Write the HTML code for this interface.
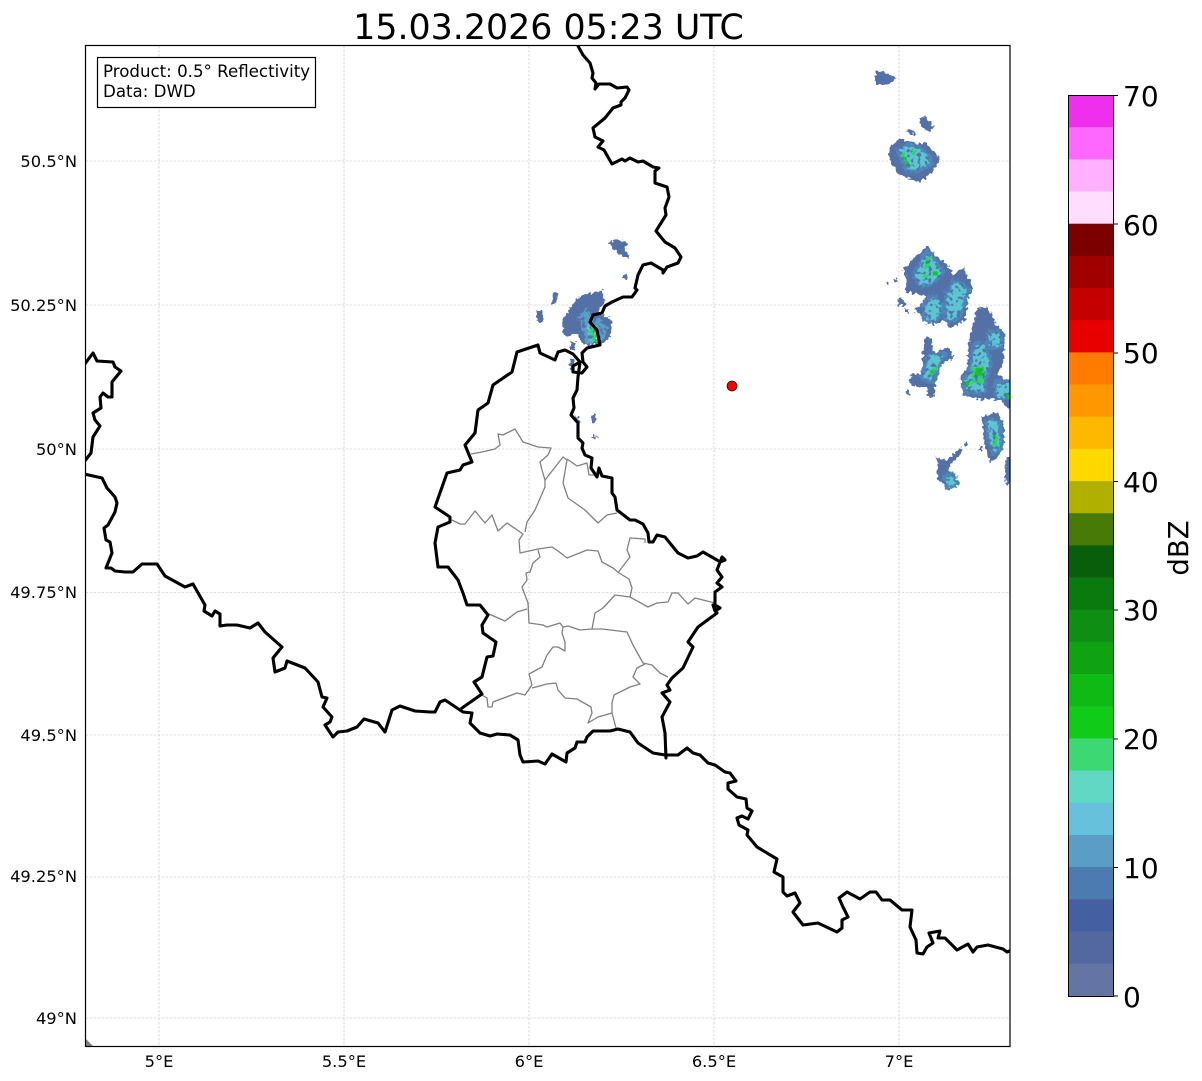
<!DOCTYPE html>
<html>
<head>
<meta charset="utf-8">
<style>
html,body{margin:0;padding:0;background:#fff;width:1202px;height:1081px;overflow:hidden}
svg{display:block}
text{font-family:"DejaVu Sans",sans-serif;fill:#000}
.t{font-size:16.3px}
.c{font-size:28px}
.b{fill:none;stroke:#000;stroke-width:3.1;stroke-linejoin:round;stroke-linecap:round}
.g{fill:none;stroke:#808080;stroke-width:1.3;stroke-linejoin:round}
.m{fill:#5cc6d0;stroke:#4f86b8;stroke-width:7;paint-order:stroke;stroke-linejoin:round}
.d{fill:#5570a6}
.n{fill:#2fd46a}
.k{fill:#10c820}
</style>
</head>
<body>
<svg width="1202" height="1081" viewBox="0 0 1202 1081" xmlns="http://www.w3.org/2000/svg">
<defs>
<clipPath id="ax"><rect x="85.5" y="45.5" width="924.5" height="1001"/></clipPath>
<filter id="r" filterUnits="userSpaceOnUse" x="500" y="40" width="520" height="460" color-interpolation-filters="sRGB">
<feTurbulence type="fractalNoise" baseFrequency="0.33" numOctaves="1" seed="4" result="n"/>
<feDisplacementMap in="SourceGraphic" in2="n" scale="7" xChannelSelector="R" yChannelSelector="G" result="s"/>
<feTurbulence type="fractalNoise" baseFrequency="0.28" numOctaves="1" seed="11" result="n2"/>
<feColorMatrix in="n2" type="matrix" values="0 0 0 0 0.31  0 0 0 0 0.45  0 0 0 0 0.68  9 0 0 0 -4.9" result="p"/>
<feComposite in="p" in2="s" operator="in" result="pc"/>
<feMerge><feMergeNode in="s"/><feMergeNode in="pc"/></feMerge>
</filter>
</defs>

<text x="548.5" y="39" text-anchor="middle" style="font-size:34.8px">15.03.2026 05:23 UTC</text>

<g stroke="#bcbcbc" stroke-width="0.6" stroke-dasharray="2.5 1.5">
<path d="M159 46V1046M344 46V1046M529 46V1046M714 46V1046M899 46V1046"/>
<path d="M86 161H1010M86 305H1010M86 449H1010M86 592.500H1010M86 735H1010M86 877H1010M86 1018H1010"/>
</g>

<g clip-path="url(#ax)">
<g filter="url(#r)">
<!-- top right small -->
<polygon class="d" points="876,71 883,71 897,79 892,82 886,85 877,85 875,80"/>
<polygon class="d" points="919,119 926,117 934,127 930,131 922,128"/>
<polygon class="d" points="908,128 917,134 915,136 907,131"/>
<!-- cell A -->
<polygon class="d" points="888,148 900,138 910,142 917,145 925,142 940,158 937,167 927,177 920,182 905,177 896,172 890,160"/>
<polygon class="m" points="899,150 912,145 927,155 930,163 916,170 908,170"/>
<polygon class="n" points="900,154 904,153 911,166 908,168"/>
<polygon class="n" points="911,149 916,151 915,155 911,153"/>
<polygon class="k" points="903,157 905,156 909,165 907,166"/>
<!-- cell B -->
<polygon class="d" points="903,270 917,255 927,247 938,257 950,268 952,275 963,268 973,288 968,298 965,320 950,328 943,320 933,325 923,317 913,310 923,303 925,295 910,293 905,293 907,280"/>
<polygon class="m" points="915,275 927,253 942,272 933,282 921,285"/>
<polygon class="m" points="925,305 933,297 943,307 935,320 927,320"/>
<polygon class="m" points="947,294 955,282 967,290 958,317 947,320"/>
<polygon class="n" points="925,257 930,257 930,268 925,268"/>
<polygon class="k" points="926,260 929,260 929,265 926,265"/>
<polygon class="k" points="932,272 937,271 937,275 932,276"/>
<polygon class="n" points="922,273 930,275 928,278 923,277"/>
<polygon class="d" points="898,299 905,300 905,306 898,305"/>
<polygon class="d" points="887,282 890,283 889,286 887,285"/>
<polygon class="d" points="895,278 898,278 898,282 895,282"/>
<polygon class="d" points="905,309 908,309 908,313 905,313"/>
<!-- cell C -->
<polygon class="d" points="923,355 925,338 932,338 933,353 948,347 953,355 952,360 940,363 937,377 933,397 928,397 927,387 913,387 909,382 912,373 920,375 923,363"/>
<polygon class="m" points="923,378 930,356 945,355 938,365 933,380"/>
<polygon class="n" points="927,376 933,367 937,368 932,378"/>
<polygon class="k" points="931,370 934,369 934,373 931,373"/>
<polygon class="d" points="907,390 909,390 909,394 907,394"/>
<!-- cell D -->
<polygon class="d" points="977,308 988,307 995,323 1005,333 1003,363 997,375 1012,383 1012,410 1005,407 1000,397 980,400 963,395 960,377 967,370 968,347 972,327"/>
<polygon class="m" points="975,345 984,345 989,363 984,380 984,391 967,391 965,381 972,370"/>
<polygon class="m" points="990,333 1000,333 1000,346 990,346"/>
<polygon class="m" points="997,383 1012,383 1012,397 997,397"/>
<polygon class="n" points="972,368 984,366 984,382 972,384"/>
<polygon class="k" points="975,369 982,368 982,377 975,378"/>
<polygon class="k" points="965,381 970,381 970,386 965,386"/>
<polygon class="k" points="1006,393 1012,393 1012,398 1006,398"/>
<!-- cell E -->
<polygon class="d" points="982,417 995,412 1003,420 1005,443 998,457 990,463 987,453 983,437"/>
<polygon class="m" points="988,420 998,422 1000,447 995,453 990,440"/>
<polygon class="n" points="993,434 997,434 997,448 993,448"/>
<polygon class="d" points="979,447 982,447 982,451 979,451"/>
<polygon class="d" points="965,442 968,442 968,446 965,446"/>
<!-- cell F -->
<polygon class="d" points="935,457 947,460 960,448 962,453 948,467 957,482 948,488 937,478 938,463"/>
<polygon class="m" points="946,476 953,476 955,484 948,486"/>
<polygon class="d" points="1006,457 1012,457 1012,484 1006,484 1005,470"/>
<!-- cell H -->
<polygon class="d" points="562,320 578,297 602,290 605,302 597,312 612,320 610,337 600,345 583,345 577,333 567,338 563,333"/>
<polygon fill="#5a9ec6" points="578,318 586,306 592,318 600,318 608,326 604,340 586,344"/>
<polygon fill="#5fd2c4" points="587,325 597,325 600,340 591,344"/>
<polygon class="n" points="589,327 594,327 597,343 592,343"/>
<polygon class="d" points="537,310 543,310 543,322 537,322"/>
<polygon class="d" points="553,292 558,292 556,305 552,305"/>
<polygon class="d" points="570,342 575,342 575,350 570,350"/>
<polygon class="d" points="570,358 574,358 574,370 570,370"/>
<polygon class="d" points="574,415 579,417 580,423 576,423"/>
<polygon class="d" points="592,415 595,415 595,423 592,423"/>
<polygon class="d" points="593,435 597,436 596,438 593,438"/>
<polygon class="d" points="608,243 618,239 628,243 625,250 630,255 625,258 617,253"/>
<polygon class="d" points="623,275 627,274 628,279 624,279"/>
</g>

<polygon fill="#808080" points="85,1038 93,1046 85,1046"/>

<g class="g">
<path d="M471 454L482 452L495 449L500 445L498 434L503 435L515 429L523 442L538 447L551 448L548 455L540 462L542 470L545 480L545 487L535 510L527 522L525 532"/>
<path d="M452 520L460 524L465 524L475 511L485 523L492 515L498 531L507 523L523 534L519 540L520 553L538 549L552 547L558 551L567 558L587 550L598 551L602 562L613 568L619 573L629 579L632 588L630 597"/>
<path d="M545 480L563 457L567 460L563 483L568 498L585 510L598 523L607 515L617 513"/>
<path d="M567 459L577 466L587 463L589 475L597 475"/>
<path d="M645 543L645 539L630 538L627 550L630 557L620 570L618 573"/>
<path d="M538 550L540 557L533 563L530 572L526 573L527 580L522 587L528 603L529 623L543 625L547 627L560 623L563 627L568 626L580 630L592 629L602 629L627 632L633 645L643 663L652 665L660 673L668 677"/>
<path d="M489 614L505 621L517 612L527 609"/>
<path d="M592 629L595 613L603 608L615 595L630 597L648 607L657 603L668 602L672 593L678 593L688 604L695 598L715 603"/>
<path d="M563 627L562 633L565 642L565 651L558 647L553 647L547 655L542 667L529 674L532 685L525 695L517 693L493 702L492 707L488 707L487 698L482 695"/>
<path d="M532 688L547 684L556 683L558 690L565 698L577 699L591 707L592 713L588 723L598 717L612 713L616 728"/>
<path d="M612 713L612 703L614 695L630 687L640 684L633 677L637 668L645 664"/>
</g>

<g class="b">
<!-- main east border -->
<path d="M578 46L583 55L590 63L593 73L592 78L596 83L595 89L599 84L610 84L617 88L627 87L629 90L625 98L621 102L621 105L613 108L605 118L593 128L595 137L603 141L598 147L604 150L612 164L622 159L625 161L630 158L638 162L643 161L653 167L659 168L655 171L655 183L667 187L669 197L665 208L666 215L656 231L665 242L675 248L681 257L678 263L667 267L663 273L663 270L651 263L643 265L638 275L635 288L637 290L632 297L623 297L612 302L605 306L602 313L593 315L590 322L597 330L600 345L587 348L582 353L583 362L587 367L582 373L573 372L573 366L580 362L578 377L577 390L573 398L574 408L571 415L578 423L578 438L583 443L582 448L585 455L592 458L591 468L597 477L599 468L602 476L612 478L612 493L615 497L617 510L630 520L635 520L643 524L648 533L649 542L653 542L657 535L665 537L678 553L688 558L697 556L703 552L717 560L720 562L725 560L722 557L717 570L722 577L717 583L722 587L715 592L715 605L720 608L715 611L713 605L717 613L698 627L688 642L693 647L683 668L672 678L667 685L670 690L662 693L670 702L662 717L665 733L666 758"/>
<!-- lux west & north -->
<path d="M580 362L573 354L565 350L558 352L555 360L540 353L538 345L517 352L512 372L493 385L488 403L478 410L475 433L465 445L472 462L463 465L460 470L447 473L435 507L450 517L450 522L438 527L435 543L438 567L448 567L458 580L463 593L467 605L480 605L488 615L482 625L483 633L496 642L493 656L487 657L482 677L474 682L482 694L462 708"/>
<!-- lux south -->
<path d="M460 710L463 712L472 713L470 723L480 733L490 736L497 734L510 735L518 740L520 755L523 762L538 761L545 764L552 754L566 762L567 753L575 748L577 742L585 742L587 737L593 731L610 731L618 729L630 732L638 743L653 753L665 755L678 755L687 748L693 753L700 755L708 763L715 765L725 772L730 773L736 781L728 783L728 789L737 797L746 799L747 808L752 811L748 819L742 816L737 818L739 825L748 830L747 835L757 847L777 859L774 872L783 877L783 892L787 896L795 893L800 903L793 912L803 925L818 923L837 932L842 928L842 920L848 917L843 907L839 898L847 892L860 899L870 892L876 892L882 900L890 900L902 910L912 910L910 927L916 940L917 953L923 954L927 947L933 943L929 933L940 931L938 938L945 938L957 950L968 944L973 952L977 947L988 945L1003 949L1007 952L1012 950"/>
<!-- west -->
<path d="M84 365L93 353L97 361L113 362L115 367L121 371L112 382L112 397L108 397L103 393L100 397L101 408L93 413L95 420L100 426L93 437L91 453L84 462"/>
<path d="M84 474L102 478L107 488L115 497L117 503L115 512L108 525L104 528L106 540L110 542L112 553L106 568L111 568L115 571L125 572L133 572L142 564L157 564L165 576L185 587L193 584L205 605L204 611L212 616L215 611L220 614L220 626L227 625L237 625L250 628L258 623L265 632L282 647L273 658L275 672L285 668L287 661L305 668L318 682L322 697L327 698L323 707L332 717L330 722L325 725L333 737L338 732L347 731L357 727L364 719L378 723L385 732L392 710L400 706L415 711L430 712L435 712L440 702L445 700L460 710"/>
</g>

<circle cx="732" cy="386" r="5" fill="#ff0000" stroke="#000" stroke-width="0.7"/>
</g>

<rect x="85.500" y="45.500" width="924.500" height="1001" fill="none" stroke="#000" stroke-width="1.2"/>

<rect x="97.500" y="57.500" width="218" height="50" fill="#fff" stroke="#000" stroke-width="1.2"/>
<text x="103" y="77" style="font-size:16.650px">Product: 0.5° Reflectivity</text>
<text x="103" y="97" style="font-size:16.650px">Data: DWD</text>

<g class="t">
<text x="77" y="167" text-anchor="end">50.5°N</text>
<text x="77" y="311" text-anchor="end">50.25°N</text>
<text x="77" y="455" text-anchor="end">50°N</text>
<text x="77" y="598" text-anchor="end">49.75°N</text>
<text x="77" y="741" text-anchor="end">49.5°N</text>
<text x="77" y="882" text-anchor="end">49.25°N</text>
<text x="77" y="1024" text-anchor="end">49°N</text>
<text x="159" y="1067" text-anchor="middle">5°E</text>
<text x="344" y="1067" text-anchor="middle">5.5°E</text>
<text x="529" y="1067" text-anchor="middle">6°E</text>
<text x="714" y="1067" text-anchor="middle">6.5°E</text>
<text x="899" y="1067" text-anchor="middle">7°E</text>
</g>

<!-- colorbar -->
<g>
<rect x="1068" y="95.000" width="45" height="32.5" fill="#ee30ee"/>
<rect x="1068" y="127.200" width="45" height="32.5" fill="#ff68ff"/>
<rect x="1068" y="159.400" width="45" height="32.5" fill="#ffb0ff"/>
<rect x="1068" y="191.500" width="45" height="32.5" fill="#ffddff"/>
<rect x="1068" y="223.700" width="45" height="32.5" fill="#7c0000"/>
<rect x="1068" y="255.900" width="45" height="32.5" fill="#a00000"/>
<rect x="1068" y="288.000" width="45" height="32.5" fill="#c40000"/>
<rect x="1068" y="320.200" width="45" height="32.5" fill="#e60000"/>
<rect x="1068" y="352.400" width="45" height="32.5" fill="#ff7c00"/>
<rect x="1068" y="384.600" width="45" height="32.5" fill="#ff9800"/>
<rect x="1068" y="416.700" width="45" height="32.5" fill="#ffb800"/>
<rect x="1068" y="448.900" width="45" height="32.5" fill="#ffd800"/>
<rect x="1068" y="481.100" width="45" height="32.5" fill="#b0b000"/>
<rect x="1068" y="513.200" width="45" height="32.5" fill="#487a08"/>
<rect x="1068" y="545.400" width="45" height="32.5" fill="#085e0a"/>
<rect x="1068" y="577.600" width="45" height="32.5" fill="#0a7a0e"/>
<rect x="1068" y="609.800" width="45" height="32.5" fill="#0e8e12"/>
<rect x="1068" y="641.900" width="45" height="32.5" fill="#0fa212"/>
<rect x="1068" y="674.100" width="45" height="32.5" fill="#10ba14"/>
<rect x="1068" y="706.300" width="45" height="32.5" fill="#10cc18"/>
<rect x="1068" y="738.400" width="45" height="32.5" fill="#3cd873"/>
<rect x="1068" y="770.600" width="45" height="32.5" fill="#60d8c4"/>
<rect x="1068" y="802.800" width="45" height="32.5" fill="#66c1dc"/>
<rect x="1068" y="835.000" width="45" height="32.5" fill="#5a9ec6"/>
<rect x="1068" y="867.100" width="45" height="32.5" fill="#4c7bb0"/>
<rect x="1068" y="899.300" width="45" height="32.5" fill="#4560a0"/>
<rect x="1068" y="931.500" width="45" height="32.5" fill="#53689e"/>
<rect x="1068" y="963.600" width="45" height="32.4" fill="#6474a4"/>
</g>
<rect x="1068.500" y="95.500" width="45" height="901" fill="none" stroke="#000" stroke-width="1"/>
<path d="M1113 95.500h5M1113 224h5M1113 353h5M1113 481.500h5M1113 610h5M1113 739h5M1113 867.500h5M1113 996h5" stroke="#000" stroke-width="1"/>
<g class="c">
<text x="1123" y="106">70</text>
<text x="1123" y="235">60</text>
<text x="1123" y="363">50</text>
<text x="1123" y="492">40</text>
<text x="1123" y="620">30</text>
<text x="1123" y="749">20</text>
<text x="1123" y="878">10</text>
<text x="1123" y="1007">0</text>
</g>
<text transform="translate(1188,548) rotate(-90)" text-anchor="middle" style="font-size:27.5px">dBZ</text>
</svg>
</body>
</html>
